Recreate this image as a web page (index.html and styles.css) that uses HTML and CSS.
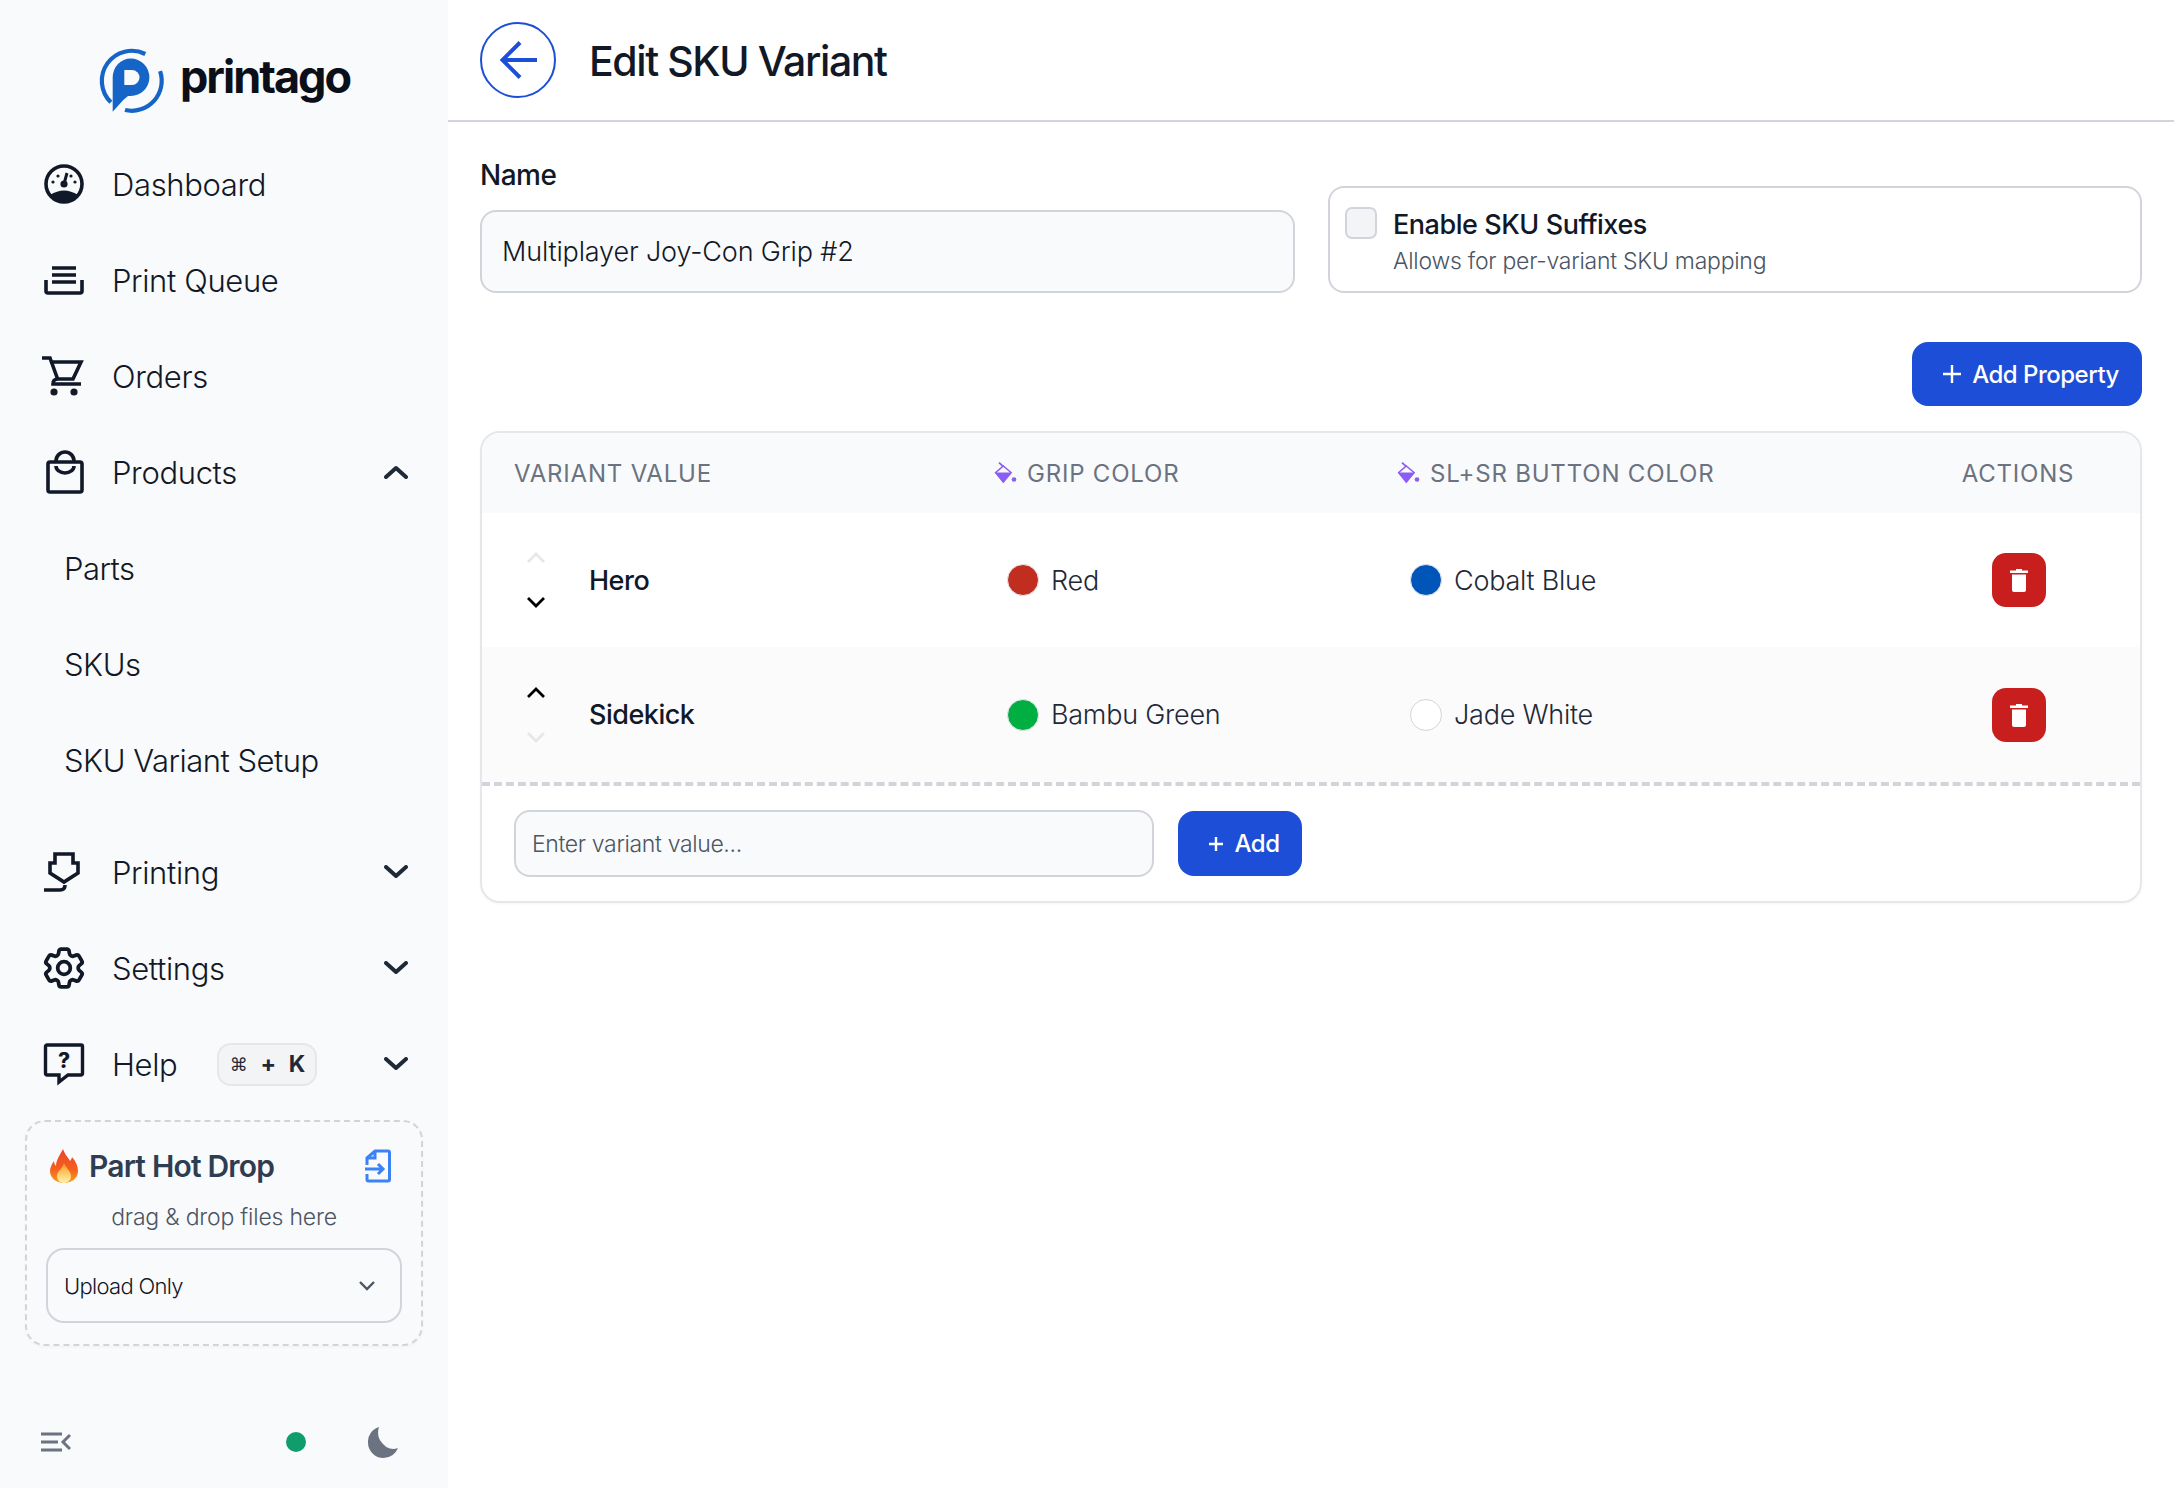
FILE: index.html
```html
<!DOCTYPE html>
<html lang="en">
<head>
  <meta charset="UTF-8" />
  <title>Edit SKU Variant</title>
  <link rel="stylesheet" href="styles.css">
</head>
<body>
  <aside class="sidebar">
    <div class="logo">
      <svg class="logo-mark" viewBox="0 0 64 64">
        <path d="M46.300 6A30 30 0 0 0 11.900 54.300" fill="none" stroke="#1565c9" stroke-width="4.200"/>
        <path d="M61.100 23.100A30 30 0 0 1 26 62" fill="none" stroke="#1565c9" stroke-width="4.200"/>
        <path d="M13.700 63.700V29.300A18 18.700 0 0 1 31.700 10.600 18.700 18.700 0 1 1 31.700 48H29L24.300 52Z" fill="#1565c9"/>
        <path d="M25.300 22H33a7.500 7.500 0 0 1 0 15H25.300Z" fill="#f9fafb"/>
      </svg>
      <span class="logo-text">printago</span>
    </div>

    <nav class="nav">
      <a class="nav-item">
        <svg class="nav-icon" viewBox="0 0 40 40">
          <circle cx="20" cy="20" r="18" fill="none" stroke="#111827" stroke-width="3.600"/>
          <path d="M6 31q14-9 28 0-6 7-14 7T6 31Z" fill="#111827"/>
          <path d="M20 20l3-11" stroke="#111827" stroke-width="3" fill="none"/>
          <circle cx="20" cy="20" r="3.600" fill="#111827"/>
          <circle cx="9" cy="18" r="1.600" fill="#111827"/><circle cx="14" cy="12" r="1.600" fill="#111827"/>
          <circle cx="31" cy="18" r="1.600" fill="#111827"/><circle cx="27" cy="12" r="1.600" fill="#111827"/>
        </svg>
        Dashboard
      </a>
      <a class="nav-item">
        <svg class="nav-icon" viewBox="0 0 40 40" fill="none" stroke="#111827" stroke-width="3.600">
          <path d="M8 8h24M8 15h24M8 22h24"/>
          <path d="M2 20v11a2 2 0 0 0 2 2h32a2 2 0 0 0 2-2V20"/>
        </svg>
        Print Queue
      </a>
      <a class="nav-item">
        <svg class="nav-icon cart" viewBox="0 0 40 40" fill="none" stroke="#111827" stroke-width="3.600">
          <path d="M0 2h8l8 22"/>
          <path d="M8 6h31l-8 17H16q-5 0-5 5h28"/>
          <circle cx="12" cy="36" r="3.600" fill="#111827" stroke="none"/>
          <circle cx="32" cy="36" r="3.600" fill="#111827" stroke="none"/>
        </svg>
        Orders
      </a>
      <a class="nav-item">
        <svg class="nav-icon" viewBox="0 0 40 40" fill="none" stroke="#111827" stroke-width="3.600">
          <rect x="4" y="10" width="34" height="30" rx="2"/>
          <path d="M12 10V9a9 9 0 0 1 18 0v1"/>
          <path d="M12 14a9 7 0 0 0 18 0"/>
        </svg>
        Products
        <svg class="chevron" viewBox="0 0 24 14"><path d="M2 12L12 3l10 9"/></svg>
      </a>
      <a class="nav-sub">Parts</a>
      <a class="nav-sub">SKUs</a>
      <a class="nav-sub">SKU Variant Setup</a>
      <a class="nav-item nav-gap">
        <svg class="nav-icon" viewBox="0 0 40 40" fill="none" stroke="#111827" stroke-width="3.600">
          <path d="M11 2h18v9h5v10L20 30 6 21V11h5Z"/>
          <path d="M0 38h16q5 0 5-5"/>
        </svg>
        Printing
        <svg class="chevron" viewBox="0 0 24 14"><path d="M2 2l10 9 10-9"/></svg>
      </a>
      <a class="nav-item">
        <svg class="nav-icon" viewBox="2.500 2.500 19 19" fill="none" stroke="#111827" stroke-width="1.800">
          <path d="M9.594 3.940c.09-.542.56-.94 1.110-.94h2.593c.55 0 1.020.398 1.110.94l.213 1.281c.063.374.313.686.645.870.074.040.147.083.220.127.325.196.720.257 1.075.124l1.217-.456a1.125 1.125 0 0 1 1.370.490l1.296 2.247a1.125 1.125 0 0 1-.260 1.431l-1.003.827c-.293.241-.438.613-.430.992a7.723 7.723 0 0 1 0 .255c-.008.378.137.750.430.991l1.004.827c.424.350.534.955.260 1.430l-1.298 2.247a1.125 1.125 0 0 1-1.369.491l-1.217-.456c-.355-.133-.750-.072-1.076.124a6.470 6.470 0 0 1-.220.128c-.331.183-.581.495-.644.869l-.213 1.281c-.090.543-.560.940-1.110.940h-2.594c-.550 0-1.019-.398-1.110-.940l-.213-1.281c-.062-.374-.312-.686-.644-.870a6.520 6.520 0 0 1-.220-.127c-.325-.196-.720-.257-1.076-.124l-1.217.456a1.125 1.125 0 0 1-1.369-.490l-1.297-2.247a1.125 1.125 0 0 1 .260-1.431l1.004-.827c.292-.240.437-.613.430-.991a6.932 6.932 0 0 1 0-.255c.007-.380-.138-.751-.430-.992l-1.004-.827a1.125 1.125 0 0 1-.260-1.430l1.297-2.247a1.125 1.125 0 0 1 1.370-.491l1.216.456c.356.133.751.072 1.076-.124.072-.044.146-.086.220-.128.332-.183.582-.495.644-.869l.214-1.280Z"/>
          <path d="M15 12a3 3 0 1 1-6 0 3 3 0 0 1 6 0Z"/>
        </svg>
        Settings
        <svg class="chevron" viewBox="0 0 24 14"><path d="M2 2l10 9 10-9"/></svg>
      </a>
      <a class="nav-item">
        <svg class="nav-icon" viewBox="0 0 40 40">
          <path d="M3 1h34a1.500 1.500 0 0 1 1.500 1.500v27a1.500 1.500 0 0 1-1.500 1.500H24l-9 7v-7H3a1.500 1.500 0 0 1-1.500-1.500v-27A1.500 1.500 0 0 1 3 1Z" fill="none" stroke="#111827" stroke-width="3.400"/>
          <text x="20" y="24" text-anchor="middle" class="help-mark">?</text>
        </svg>
        Help
        <kbd class="shortcut"><span class="cmd">⌘</span><span>+</span><span>K</span></kbd>
        <svg class="chevron" viewBox="0 0 24 14"><path d="M2 2l10 9 10-9"/></svg>
      </a>
    </nav>

    <section class="hot-drop">
      <div class="hot-head">
        <svg class="flame" viewBox="0 0 28 34">
          <defs>
            <linearGradient id="fireOuter" x1="0" y1="0" x2="0" y2="1">
              <stop offset="0" stop-color="#e8452c"/><stop offset=".6" stop-color="#f4601e"/><stop offset="1" stop-color="#f9a11b"/>
            </linearGradient>
            <linearGradient id="fireInner" x1="0" y1="0" x2="0" y2="1">
              <stop offset="0" stop-color="#fb9a1c"/><stop offset="1" stop-color="#fff3b0"/>
            </linearGradient>
          </defs>
          <path d="M13 0c2 6 5 8 7 12 1-1 2-3 2-4 4 5 6 9 6 14 0 7-6 12-14 12S0 29 0 22c0-4 2-7 4-10 0 2 1 4 2 5C6 11 10 6 13 0Z" fill="url(#fireOuter)"/>
          <path d="M14 14c1 4 7 8 7 13 0 4-3 7-7 7s-7-3-7-7c0-5 6-8 7-13Z" fill="url(#fireInner)"/>
        </svg>
        <span class="hot-title">Part Hot Drop</span>
        <svg class="hot-file" viewBox="0 0 26 34" fill="none" stroke="#3b82f6" stroke-width="3">
          <path d="M2 16V9l8-7h13a1.500 1.500 0 0 1 1.500 1.500v27A1.500 1.500 0 0 1 23 32H3.500A1.500 1.500 0 0 1 2 30.500V25"/>
          <path d="M10 2v7H2M0 20h17M13 15l5 5-5 5"/>
        </svg>
      </div>
      <p class="hot-sub">drag &amp; drop files here</p>
      <div class="select">
        Upload Only
        <svg class="select-arrow" viewBox="0 0 16 10"><path d="M1 1l7 7 7-7"/></svg>
      </div>
    </section>

    <div class="side-foot">
      <svg class="collapse" viewBox="0 0 30 20" fill="none" stroke="#6b7280" stroke-width="3">
        <path d="M0 2h21M0 10h17M0 18h21M29 3l-7 7 7 7"/>
      </svg>
      <span class="status-dot"></span>
      <svg class="moon" viewBox="0 0 30 31"><path d="M11 0A15.500 15.500 0 0 0 0 15.500 15.500 15.500 0 0 0 15.500 31 15.500 15.500 0 0 0 30 21 13 13 0 0 1 15 17 17 17 0 0 1 11 0Z" fill="#6b7280"/></svg>
    </div>
  </aside>

  <main class="main">
    <header class="page-head">
      <button class="back">
        <svg viewBox="0 0 38 38" fill="none" stroke="#1d4ed8" stroke-width="4"><path d="M38 19H4M21 1.500L3.500 19 21 36.500"/></svg>
      </button>
      <h1>Edit SKU Variant</h1>
    </header>

    <div class="content">
      <div class="top-fields">
        <div>
          <label class="field-label">Name</label>
          <div class="input name-input">Multiplayer Joy-Con Grip #2</div>
        </div>
        <div class="suffix-card">
          <span class="checkbox"></span>
          <div>
            <div class="suffix-title">Enable SKU Suffixes</div>
            <div class="suffix-sub">Allows for per-variant SKU mapping</div>
          </div>
        </div>
      </div>

      <div class="toolbar">
        <button class="btn btn-property">
          <svg class="plus" viewBox="0 0 18 18"><path d="M9 0v18M0 9h18"/></svg>
          Add Property
        </button>
      </div>

      <div class="table-card">
        <table class="variants">
          <colgroup>
            <col class="col-value"><col class="col-grip"><col class="col-button"><col class="col-actions">
          </colgroup>
          <thead>
            <tr>
              <th>Variant Value</th>
              <th><svg class="bucket" viewBox="0 0 21 21"><path d="M4 .700l4.300 3.800" fill="none" stroke="#8b5cf6" stroke-width="1.800"/><path d="M8.300 4L16 10.500 8.300 20 .700 10.500Z" fill="none" stroke="#8b5cf6" stroke-width="1.600"/><path d="M0 10.500h17L8.300 20.700Z" fill="#8b5cf6"/><circle cx="19" cy="17.500" r="2.300" fill="#8b5cf6"/></svg>Grip Color</th>
              <th><svg class="bucket" viewBox="0 0 21 21"><path d="M4 .700l4.300 3.800" fill="none" stroke="#8b5cf6" stroke-width="1.800"/><path d="M8.300 4L16 10.500 8.300 20 .700 10.500Z" fill="none" stroke="#8b5cf6" stroke-width="1.600"/><path d="M0 10.500h17L8.300 20.700Z" fill="#8b5cf6"/><circle cx="19" cy="17.500" r="2.300" fill="#8b5cf6"/></svg>SL+SR Button Color</th>
              <th class="center">Actions</th>
            </tr>
          </thead>
          <tbody>
            <tr>
              <td>
                <div class="value-cell">
                  <div class="reorder">
                    <svg class="off" viewBox="0 0 18 12"><path d="M1 10l8-8 8 8"/></svg>
                    <svg viewBox="0 0 18 12"><path d="M1 2l8 8 8-8"/></svg>
                  </div>
                  <span class="value-name">Hero</span>
                </div>
              </td>
              <td><div class="color-cell"><span class="swatch swatch-red"></span>Red</div></td>
              <td><div class="color-cell"><span class="swatch swatch-blue"></span>Cobalt Blue</div></td>
              <td><button class="delete"><svg viewBox="0 0 18 24"><path d="M6 2.500V1h6v1.500h6v2.500H0V2.500Z" fill="#fff"/><path d="M2 6.500h14v15.500a2 2 0 0 1-2 2H4a2 2 0 0 1-2-2Z" fill="#fff"/></svg></button></td>
            </tr>
            <tr class="row-alt">
              <td>
                <div class="value-cell">
                  <div class="reorder">
                    <svg viewBox="0 0 18 12"><path d="M1 10l8-8 8 8"/></svg>
                    <svg class="off" viewBox="0 0 18 12"><path d="M1 2l8 8 8-8"/></svg>
                  </div>
                  <span class="value-name">Sidekick</span>
                </div>
              </td>
              <td><div class="color-cell"><span class="swatch swatch-green"></span>Bambu Green</div></td>
              <td><div class="color-cell"><span class="swatch swatch-white"></span>Jade White</div></td>
              <td><button class="delete"><svg viewBox="0 0 18 24"><path d="M6 2.500V1h6v1.500h6v2.500H0V2.500Z" fill="#fff"/><path d="M2 6.500h14v15.500a2 2 0 0 1-2 2H4a2 2 0 0 1-2-2Z" fill="#fff"/></svg></button></td>
            </tr>
          </tbody>
        </table>
        <div class="add-row">
          <div class="input variant-input">Enter variant value...</div>
          <button class="btn btn-add">
            <svg class="plus" viewBox="0 0 18 18"><path d="M9 2v14M2 9h14"/></svg>
            Add
          </button>
        </div>
      </div>
    </div>
  </main>
</body>
</html>
```

FILE: styles.css
```css
* {
  box-sizing: border-box;
}
body {
  margin: 0;
  display: flex;
  height: 100vh;
  overflow: hidden;
  font-family: Inter, sans-serif;
  color: #111827;
  background: #fff;
}

/* sidebar */
.sidebar {
  width: 448px;
  flex-shrink: 0;
  background: #f9fafb;
  display: flex;
  flex-direction: column;
}
.logo {
  height: 136px;
  padding: 48px 0 0 99px;
  display: flex;
  align-items: flex-start;
  gap: 17px;
}
.logo-mark {
  width: 64px;
  height: 64px;
  overflow: visible;
}
.logo-text {
  font-size: 45px;
  line-height: 58px;
  font-weight: 700;
  color: #0b0f19;
  letter-spacing: -2px;
}
.nav-item {
  height: 96px;
  padding: 0 40px 0 44px;
  display: flex;
  align-items: center;
  gap: 28px;
  font-size: 31px;
  font-weight: 300;
  letter-spacing: -0.35px;
}
.nav-icon {
  width: 40px;
  height: 40px;
  flex-shrink: 0;
  overflow: visible;
}
.nav-icon.cart {
  margin-left: -2px;
  margin-right: 2px;
}
.nav-gap {
  margin-top: 16px;
}
.nav-sub {
  display: flex;
  align-items: center;
  height: 96px;
  padding-left: 64px;
  font-size: 31px;
  font-weight: 300;
  letter-spacing: -0.5px;
}
.chevron {
  width: 24px;
  height: 14px;
  margin-left: auto;
  fill: none;
  stroke: #1f2937;
  stroke-width: 4;
  stroke-linecap: round;
  stroke-linejoin: round;
}
.help-mark {
  font-family: Inter, sans-serif;
  font-size: 21px;
  font-weight: 800;
  fill: #111827;
  letter-spacing: 0;
}
.shortcut {
  display: flex;
  align-items: center;
  justify-content: center;
  gap: 13px;
  width: 100px;
  height: 43px;
  margin-left: 12px;
  background: #f3f4f6;
  border: 2px solid #e5e7eb;
  border-radius: 14px;
  font-family: Inter, sans-serif;
  font-size: 23px;
  font-weight: 700;
  color: #1f2937;
}
.shortcut .cmd {
  font-family: "DejaVu Sans", sans-serif;
  font-size: 18px;
  font-weight: 400;
}
.shortcut + .chevron {
  margin-left: auto;
}

.hot-drop {
  width: 398px;
  height: 226px;
  margin: 8px 0 0 25px;
  padding: 22px 19px 0;
  border: 2px dashed #d1d5db;
  border-radius: 20px;
  box-shadow: 0 1px 3px rgba(0, 0, 0, 0.04);
}
.hot-head {
  display: flex;
  align-items: center;
  height: 44px;
  padding: 0 11px 0 4px;
}
.flame {
  width: 28px;
  height: 34px;
  margin-right: 11px;
}
.hot-title {
  font-size: 30px;
  font-weight: 600;
  letter-spacing: -0.8px;
  color: #2f3d52;
}
.hot-file {
  width: 26px;
  height: 34px;
  margin-left: auto;
}
.hot-sub {
  margin: 11px 0 0;
  font-size: 23px;
  font-weight: 300;
  line-height: 36px;
  text-align: center;
  color: #4b5563;
  letter-spacing: -0.2px;
}
.select {
  display: flex;
  align-items: center;
  justify-content: space-between;
  height: 75px;
  margin-top: 13px;
  padding: 0 25px 0 16px;
  border: 2px solid #d1d5db;
  border-radius: 18px;
  font-size: 22px;
  font-weight: 300;
  letter-spacing: -0.7px;
}
.select-arrow {
  width: 16px;
  height: 10px;
  fill: none;
  stroke: #4b5563;
  stroke-width: 2.400;
}
.side-foot {
  display: flex;
  align-items: center;
  height: 32px;
  margin-top: 80px;
  padding: 0 50px 0 41px;
}
.collapse {
  width: 30px;
  height: 20px;
}
.status-dot {
  width: 20px;
  height: 20px;
  margin-left: 215px;
  border-radius: 50%;
  background: #0f9d6b;
}
.moon {
  width: 30px;
  height: 31px;
  margin-left: auto;
}

/* main */
.main {
  flex: 1;
  min-width: 0;
}
.page-head {
  height: 122px;
  padding: 0 32px;
  display: flex;
  align-items: center;
  gap: 33px;
  border-bottom: 2px solid #d1d5db;
}
.back {
  width: 76px;
  height: 76px;
  padding: 0;
  display: flex;
  align-items: center;
  justify-content: center;
  background: #fff;
  border: 2px solid #1d4ed8;
  border-radius: 50%;
}
.back svg {
  width: 38px;
  height: 38px;
}
h1 {
  margin: 0;
  padding-top: 2px;
  font-size: 41px;
  font-weight: 500;
  letter-spacing: -1.4px;
}
.content {
  padding: 35px 32px 0;
}
.top-fields {
  display: grid;
  grid-template-columns: 815px 814px;
  gap: 33px;
  align-items: end;
}
.field-label {
  display: block;
  font-size: 28px;
  line-height: 36px;
  font-weight: 500;
  margin-bottom: 17px;
  letter-spacing: -0.5px;
}
.input {
  display: flex;
  align-items: center;
  background: #f9fafb;
  border: 2px solid #d1d5db;
  border-radius: 16px;
}
.name-input {
  height: 83px;
  padding-left: 20px;
  font-size: 27px;
  font-weight: 300;
  letter-spacing: -0.15px;
}
.suffix-card {
  height: 107px;
  display: flex;
  align-items: flex-start;
  gap: 16px;
  padding: 19px 15px;
  border: 2px solid #d1d5db;
  border-radius: 16px;
}
.checkbox {
  width: 32px;
  height: 32px;
  background: #f3f4f6;
  border: 2px solid #d1d5db;
  border-radius: 7px;
}
.suffix-title {
  font-size: 27px;
  line-height: 36px;
  font-weight: 500;
  letter-spacing: -0.45px;
}
.suffix-sub {
  font-size: 23px;
  font-weight: 300;
  line-height: 36px;
  color: #4b5563;
  letter-spacing: -0.25px;
}
.toolbar {
  display: flex;
  justify-content: flex-end;
  margin-top: 49px;
}
.btn {
  display: flex;
  align-items: center;
  justify-content: center;
  gap: 11px;
  background: #1d4ed8;
  color: #fff;
  border: none;
  border-radius: 16px;
  font-family: Inter, sans-serif;
  font-weight: 500;
  font-size: 24px;
  letter-spacing: -0.5px;
}
.plus {
  width: 18px;
  height: 18px;
  fill: none;
  stroke: #fff;
  stroke-width: 2.400;
}
.btn-property {
  width: 230px;
  height: 64px;
  padding-left: 14px;
}
.table-card {
  margin-top: 25px;
  height: 472px;
  border: 2px solid #e5e7eb;
  border-radius: 20px;
  overflow: hidden;
  box-shadow: 0 1px 3px rgba(0, 0, 0, 0.04);
}
.variants {
  width: 100%;
  table-layout: fixed;
  border-collapse: collapse;
}
.col-value { width: 481px; }
.col-grip { width: 403px; }
.col-button { width: 530px; }
.col-actions { width: 244px; }
thead tr {
  height: 80px;
  background: #f9fafb;
}
th {
  padding: 0 0 0 32px;
  text-align: left;
  font-size: 24px;
  font-weight: 400;
  letter-spacing: 0.8px;
  text-transform: uppercase;
  color: #6b7280;
}
th.center {
  padding: 0;
  text-align: center;
}
.bucket {
  width: 21px;
  height: 21px;
  margin-right: 11px;
  vertical-align: -1px;
  overflow: visible;
}
tbody tr {
  height: 134px;
}
tbody td:last-child {
  padding-left: 2px;
  text-align: center;
}
.row-alt {
  height: 135px;
  background: #fbfbfc;
}
.value-cell {
  display: flex;
  align-items: center;
  gap: 44px;
  padding-left: 44px;
}
.reorder {
  display: flex;
  flex-direction: column;
  gap: 32px;
}
.reorder svg {
  display: block;
  width: 18px;
  height: 12px;
  fill: none;
  stroke: #000;
  stroke-width: 2.800;
}
.reorder svg.off {
  stroke: #e5e7eb;
}
.value-name {
  font-size: 27px;
  font-weight: 500;
  letter-spacing: -0.5px;
}
.color-cell {
  display: flex;
  align-items: center;
  gap: 12px;
  padding-left: 43px;
  font-size: 27px;
  font-weight: 300;
  color: #1f2937;
  letter-spacing: -0.25px;
}
.swatch {
  width: 32px;
  height: 32px;
  flex-shrink: 0;
  border-radius: 50%;
  border: 1px solid #e5e7eb;
}
.swatch-red { background: #c12e1f; }
.swatch-blue { background: #0056b8; }
.swatch-green { background: #00ae42; }
.swatch-white { background: #fff; border-color: #d1d5db; }
.delete {
  width: 54px;
  height: 54px;
  padding: 0;
  display: inline-flex;
  align-items: center;
  justify-content: center;
  background: #c81e1e;
  border: none;
  border-radius: 14px;
  vertical-align: middle;
}
.delete svg {
  width: 18px;
  height: 24px;
}
.add-row {
  display: flex;
  gap: 24px;
  padding: 24px 32px;
  border-top: 4px dashed #d1d5db;
}
.variant-input {
  width: 640px;
  height: 67px;
  padding-left: 16px;
  font-size: 23px;
  font-weight: 300;
  color: #4b5563;
  letter-spacing: -0.35px;
}
.btn-add {
  width: 124px;
  height: 65px;
  margin-top: 1px;
  gap: 10px;
  padding-left: 12px;
}
```
